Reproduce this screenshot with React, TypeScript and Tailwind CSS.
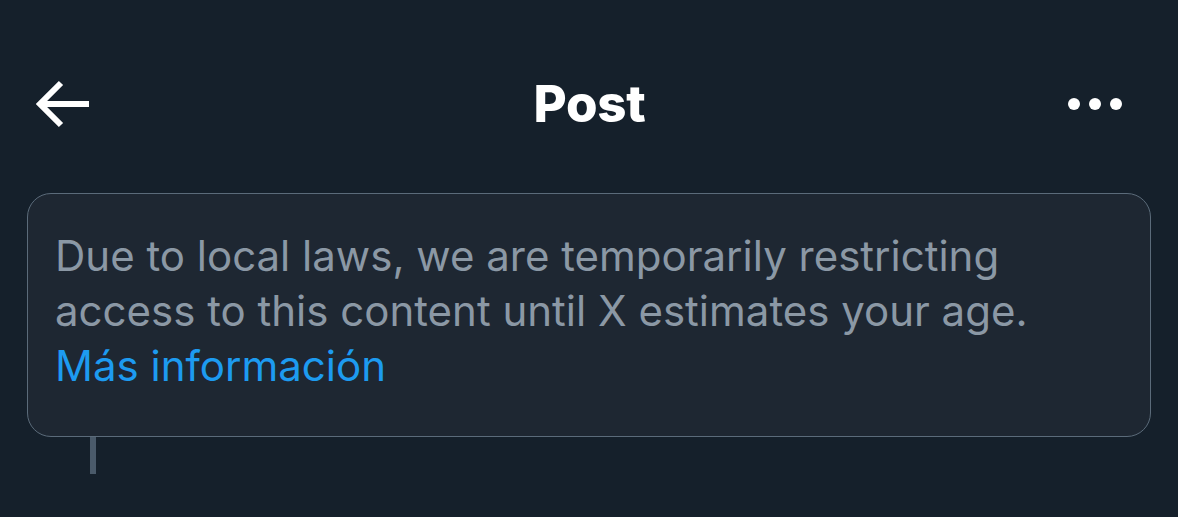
export default function App() {
  return (
    <div
      className="w-[1178px] h-[517px] bg-[#15202b] overflow-hidden"
      style={{ fontFamily: "Inter, 'Noto Sans', sans-serif" }}
    >
      <header className="flex items-center justify-between h-[172px] pt-[36px] px-[35px]">
        <svg width="54" height="48" viewBox="0 0 54 48" fill="none" stroke="#fff" strokeWidth="6">
          <path d="M54 24H5M26 3L5 24l21 21" />
        </svg>
        <h1 className="text-white font-extrabold text-[51px] tracking-[-0.3px] ml-[22px]">Post</h1>
        <div className="flex gap-[9px] pr-[21px]">
          <span className="w-[12px] h-[12px] rounded-full bg-white" />
          <span className="w-[12px] h-[12px] rounded-full bg-white" />
          <span className="w-[12px] h-[12px] rounded-full bg-white" />
        </div>
      </header>
      <div className="mx-[27px] mt-[21px] rounded-[24px] border border-[#5b6b7a] bg-[#1e2732] h-[244px] px-[27px] pt-[34px]">
        <p className="text-[#8b98a5] text-[42px] leading-[55px]">
          Due to local laws, we are temporarily restricting
          <br />
          access to this content until X estimates your age.
          <br />
          <a className="text-[#1d9bf0]">Más información</a>
        </p>
      </div>
      <div className="ml-[90px] w-[6px] h-[37px] bg-[#4a5a6a]" />
    </div>
  );
}
